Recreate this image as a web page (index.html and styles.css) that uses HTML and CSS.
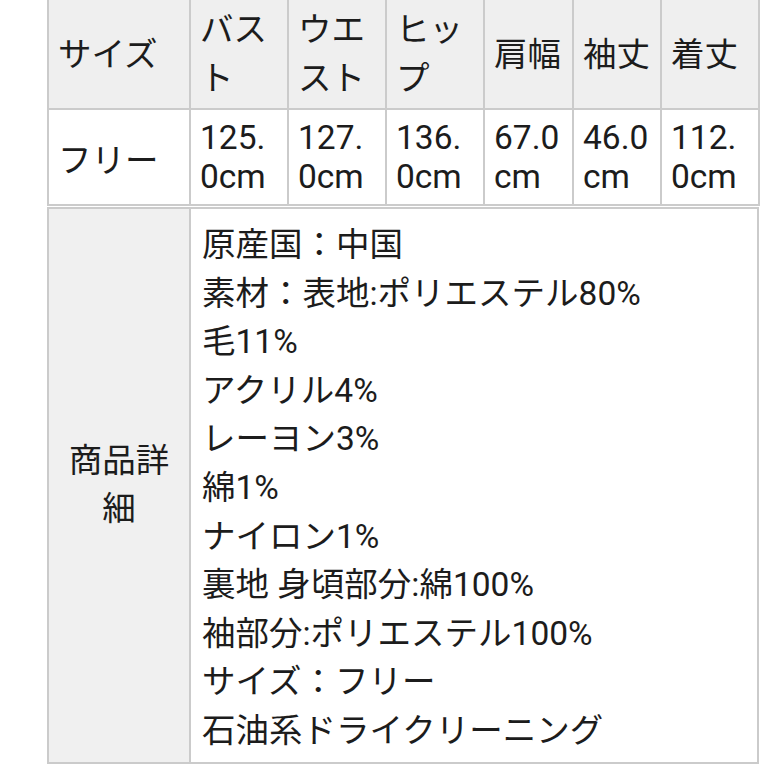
FILE: index.html
```html
<!DOCTYPE html>
<html lang="ja">
<head>
<meta charset="utf-8">
<link rel="stylesheet" href="styles.css">
</head>
<body>
<div class="page">
  <table class="sizes">
    <colgroup>
      <col class="c-label"><col class="c-98"><col class="c-98"><col class="c-98"><col class="c-89"><col class="c-88"><col class="c-98">
    </colgroup>
    <tr class="head">
      <th>サイズ</th><th>バスト</th><th>ウエスト</th><th>ヒップ</th><th>肩幅</th><th>袖丈</th><th>着丈</th>
    </tr>
    <tr>
      <td>フリー</td><td>125.0cm</td><td>127.0cm</td><td>136.0cm</td><td>67.0cm</td><td>46.0cm</td><td>112.0cm</td>
    </tr>
  </table>
  <table class="details">
    <colgroup><col class="c-label"><col></colgroup>
    <tr>
      <th>商品詳細</th>
      <td>原産国：中国<br>素材：表地:ポリエステル80%<br>毛11%<br>アクリル4%<br>レーヨン3%<br>綿1%<br>ナイロン1%<br>裏地 身頃部分:綿100%<br>袖部分:ポリエステル100%<br>サイズ：フリー<br>石油系ドライクリーニング</td>
    </tr>
  </table>
</div>
</body>
</html>
```
FILE: styles.css
```css
html, body {
  margin: 0;
  padding: 0;
  background: #ffffff;
}
.page {
  width: 712px;
  margin: -8px 0 0 47px;
  font-family: Roboto, "Noto Sans CJK JP", sans-serif;
  font-size: 33.5px;
  line-height: normal;
  color: #1c1c1c;
}
table {
  width: 712px;
  border-collapse: collapse;
  table-layout: fixed;
}
th, td {
  border: 2px solid #cbcbcb;
  padding: 8px 9px;
  font-weight: normal;
  text-align: left;
  vertical-align: middle;
  word-break: break-all;
}
.c-label { width: 142px; }
.c-98 { width: 98px; }
.c-89 { width: 89px; }
.c-88 { width: 88px; }
.head th {
  background: #efefef;
}
.details {
  margin-top: 1px;
}
.details th {
  background: #f0f0f0;
  text-align: center;
  padding: 8px 12px;
  line-height: 48px;
}
.details td {
  vertical-align: top;
  line-height: 48.6px;
  padding: 12px 12px 6px 11px;
}
```
